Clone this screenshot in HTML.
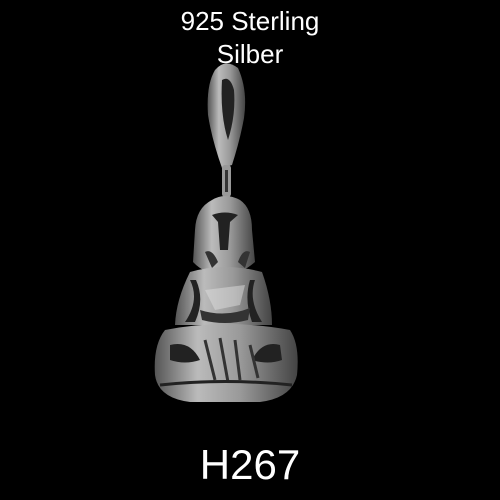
<!DOCTYPE html>
<html><head><style>
html,body{margin:0;padding:0;background:#000;width:500px;height:500px;overflow:hidden}
.t{position:absolute;left:0;width:500px;text-align:center;color:#fff;font-family:"Liberation Sans",sans-serif}
</style></head><body>
<div class="t" style="top:5px;font-size:26px;line-height:33px">925 Sterling<br>Silber</div>
<svg style="position:absolute;left:0;top:0" width="500" height="500" viewBox="0 0 500 500">
<defs>
<linearGradient id="g" x1="0" x2="1">
<stop offset="0" stop-color="#555"/><stop offset="0.3" stop-color="#bbb"/><stop offset="0.6" stop-color="#999"/><stop offset="1" stop-color="#444"/>
</linearGradient>
</defs>
<path d="M215 70 Q225 58 238 68 Q248 90 244 118 Q240 140 232 165 L222 168 Q212 140 208 115 Q206 85 215 70Z" fill="url(#g)"/>
<path d="M222 80 Q230 75 234 90 Q236 115 228 140 Q220 115 222 80Z" fill="#222"/>
<rect x="222" y="165" width="9" height="32" rx="3" fill="#999"/>
<rect x="225" y="170" width="3" height="22" fill="#333"/>
<path d="M212 200 Q225 192 240 200 Q252 208 252 230 L255 262 Q240 275 225 275 Q205 275 193 262 L195 230 Q196 208 212 200Z" fill="url(#g)"/>
<path d="M212 215 Q225 210 238 215 L230 222 L228 250 L220 250 L218 222Z" fill="#222"/>
<path d="M205 252 Q212 248 218 262 L212 268Z M238 262 Q243 248 250 252 L245 268Z" fill="#333"/>
<path d="M190 272 Q225 262 262 272 Q272 300 272 325 L175 325 Q176 300 190 272Z" fill="url(#g)"/>
<path d="M190 280 Q200 300 185 322 L195 322 Q205 300 196 280Z M255 280 Q248 300 262 322 L252 322 Q244 300 250 280Z" fill="#222"/>
<path d="M205 290 L245 285 L240 305 L215 310Z" fill="#ddd" opacity=".5"/>
<path d="M200 310 Q225 318 250 308 L248 320 Q225 326 202 320Z" fill="#333"/>
<path d="M165 330 Q225 318 290 330 Q300 345 297 375 Q292 398 260 402 L190 402 Q158 398 155 375 Q153 345 165 330Z" fill="url(#g)"/>
<path d="M170 345 Q190 340 200 360 Q185 365 170 360Z M280 345 Q262 340 252 360 Q268 365 282 360Z" fill="#222"/>
<path d="M205 340 L215 380 M220 338 L228 382 M235 340 L240 380 M250 345 L258 378" stroke="#333" stroke-width="3" fill="none"/>
<path d="M160 385 Q225 378 292 385" stroke="#222" stroke-width="3" fill="none"/>
</svg>
<div class="t" style="top:440px;font-size:42px;line-height:50px">H267</div>
</body></html>
